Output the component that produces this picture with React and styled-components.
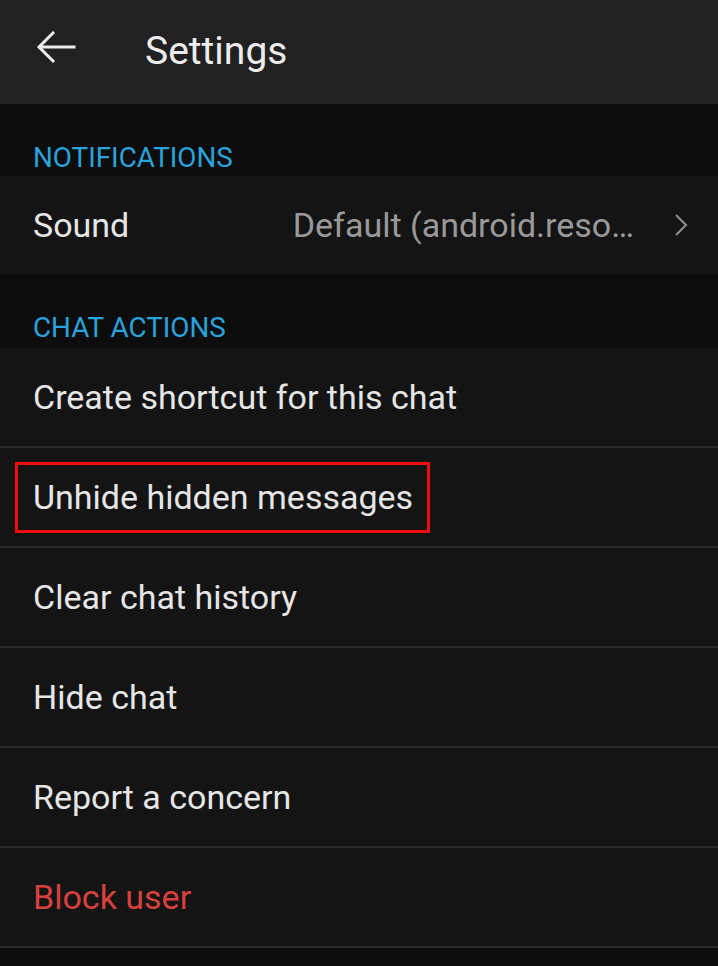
import styled, { createGlobalStyle } from "styled-components";

const GlobalStyle = createGlobalStyle`
  html, body {
    margin: 0;
    padding: 0;
    background: #0d0d0d;
  }
  body {
    font-family: Roboto, "Noto Sans", "Liberation Sans", sans-serif;
  }
`;

const Screen = styled.div`
  width: 718px;
  height: 966px;
  background: #0d0d0d;
  overflow: hidden;
`;

const Header = styled.header`
  height: 104px;
  background: #212121;
  display: flex;
  align-items: center;
  padding-left: 36px;
  box-sizing: border-box;
`;

const BackButton = styled.div`
  width: 40px;
  height: 34px;
  display: flex;
  align-items: center;
  margin-top: -8px;
`;

const Title = styled.h1`
  margin: -3px 0 0 69px;
  font-size: 39px;
  font-weight: 400;
  color: #ececec;
`;

const SectionLabel = styled.div`
  height: ${(p) => p.$height}px;
  padding: 40px 0 0 33px;
  box-sizing: border-box;
  font-size: 27.8px;
  line-height: 27px;
  color: #29a3dc;
`;

const List = styled.div`
  background: #141414;
`;

const Row = styled.div`
  height: ${(p) => (p.$single ? "98px" : "100px")};
  display: flex;
  align-items: center;
  padding: 0 33px;
  box-sizing: border-box;
  border-bottom: ${(p) => (p.$single ? "none" : "2px solid #2a2a2a")};
  font-size: 34px;
  color: ${(p) => (p.$danger ? "#d8403e" : "#e6e6e6")};
`;

const Highlight = styled.span`
  display: inline-block;
  margin-left: -18px;
  padding: 12px 14px 13px 15px;
  border: 3px solid #f00d0d;
`;

const Value = styled.span`
  margin-left: auto;
  color: #999999;
  white-space: nowrap;
`;

const Chevron = styled.span`
  margin-left: 40px;
  margin-right: -3px;
  display: flex;
`;

function App() {
  const actions = [
    { label: "Create shortcut for this chat" },
    { label: "Unhide hidden messages", highlighted: true },
    { label: "Clear chat history" },
    { label: "Hide chat" },
    { label: "Report a concern" },
    { label: "Block user", danger: true },
  ];

  return (
    <Screen>
      <GlobalStyle />
      <Header>
        <BackButton>
          <svg width="40" height="34" viewBox="0 0 40 34" fill="none">
            <path
              d="M38 16H4M17 2L3 16l14 14"
              stroke="#ececec"
              strokeWidth="3"
              strokeLinecap="square"
            />
          </svg>
        </BackButton>
        <Title>Settings</Title>
      </Header>

      <SectionLabel $height={72}>NOTIFICATIONS</SectionLabel>
      <List>
        <Row $single>
          Sound
          <Value>Default (android.reso…</Value>
          <Chevron>
            <svg width="14" height="24" viewBox="0 0 14 24" fill="none">
              <path d="M2 2l10 10L2 22" stroke="#8a8a8a" strokeWidth="2.2" />
            </svg>
          </Chevron>
        </Row>
      </List>

      <SectionLabel $height={74}>CHAT ACTIONS</SectionLabel>
      <List>
        {actions.map((a) => (
          <Row key={a.label} $danger={a.danger}>
            {a.highlighted ? <Highlight>{a.label}</Highlight> : a.label}
          </Row>
        ))}
      </List>
    </Screen>
  );
}

export default App;
